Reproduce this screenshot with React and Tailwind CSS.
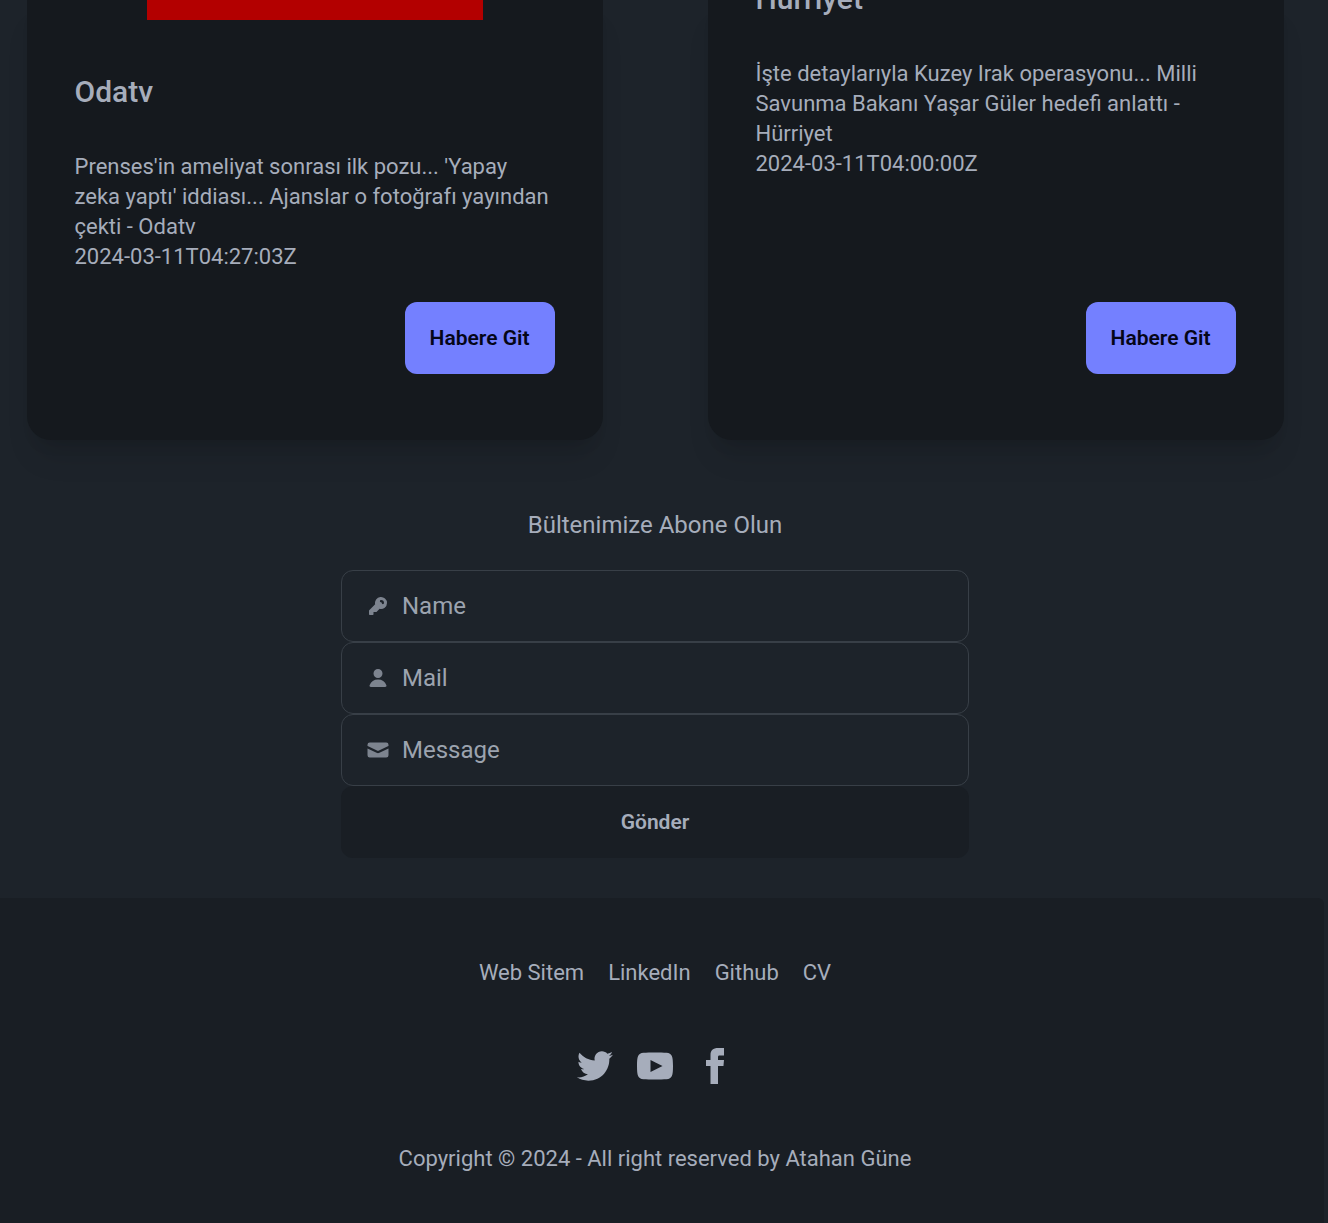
import React from "react";

const articles = [
  {
    source: "Odatv",
    text: "Prenses'in ameliyat sonrası ilk pozu... 'Yapay zeka yaptı' iddiası... Ajanslar o fotoğrafı yayından çekti - Odatv",
    date: "2024-03-11T04:27:03Z",
    banner: true,
  },
  {
    source: "Hürriyet",
    text: "İşte detaylarıyla Kuzey Irak operasyonu... Milli Savunma Bakanı Yaşar Güler hedefi anlattı - Hürriyet",
    date: "2024-03-11T04:00:00Z",
    banner: false,
  },
];

const fields = [
  {
    name: "name",
    label: "Name",
    paths: [
      "M14 6a4 4 0 0 1-4.899 3.899l-1.955 1.955a.5.5 0 0 1-.353.146H5v1.5a.5.5 0 0 1-.5.5h-2a.5.5 0 0 1-.5-.5v-2.293a.5.5 0 0 1 .146-.353l3.955-3.955A4 4 0 1 1 14 6Zm-4-2a.75.75 0 0 0 0 1.5.5.5 0 0 1 .5.5.75.75 0 0 0 1.5 0 2 2 0 0 0-2-2Z",
    ],
  },
  {
    name: "mail",
    label: "Mail",
    paths: [
      "M8 8a3 3 0 1 0 0-6 3 3 0 0 0 0 6ZM12.735 14c.618 0 1.093-.561.872-1.139a6.002 6.002 0 0 0-11.215 0c-.22.578.254 1.139.872 1.139h9.47Z",
    ],
  },
  {
    name: "message",
    label: "Message",
    paths: [
      "M2.5 3A1.5 1.5 0 0 0 1 4.5v.793c.026.009.051.02.076.032L7.674 8.51c.206.1.446.1.652 0l6.598-3.185A.755.755 0 0 1 15 5.293V4.5A1.5 1.5 0 0 0 13.5 3h-11Z",
      "M15 6.954 8.978 9.86a2.25 2.25 0 0 1-1.956 0L1 6.954V11.5A1.5 1.5 0 0 0 2.5 13h11a1.5 1.5 0 0 0 1.5-1.5V6.954Z",
    ],
  },
];

const links = ["Web Sitem", "LinkedIn", "Github", "CV"];

const socials = [
  {
    name: "Twitter",
    d: "M24 4.557c-.883.392-1.832.656-2.828.775 1.017-.609 1.798-1.574 2.165-2.724-.951.564-2.005.974-3.127 1.195-.897-.957-2.178-1.555-3.594-1.555-3.179 0-5.515 2.966-4.797 6.045-4.091-.205-7.719-2.165-10.148-5.144-1.29 2.213-.669 5.108 1.523 6.574-.806-.026-1.566-.247-2.229-.616-.054 2.281 1.581 4.415 3.949 4.89-.693.188-1.452.232-2.224.084.626 1.956 2.444 3.379 4.6 3.419-2.07 1.623-4.678 2.348-7.29 2.04 2.179 1.397 4.768 2.212 7.548 2.212 9.142 0 14.307-7.721 13.995-14.646.962-.695 1.797-1.562 2.457-2.549z",
  },
  {
    name: "YouTube",
    d: "M19.615 3.184c-3.604-.246-11.631-.245-15.23 0-3.897.266-4.356 2.62-4.385 8.816.029 6.185.484 8.549 4.385 8.816 3.6.245 11.626.246 15.23 0 3.897-.266 4.356-2.62 4.385-8.816-.029-6.185-.484-8.549-4.385-8.816zm-10.615 12.816v-8l8 3.993-8 4.007z",
  },
  {
    name: "Facebook",
    d: "M9 8h-3v4h3v12h5v-12h3.642l.358-4h-4v-1.667c0-.955.192-1.333 1.115-1.333h2.885v-5h-3.808c-3.596 0-5.192 1.583-5.192 4.615v3.385z",
  },
];

function ArticleCard({ article }) {
  return (
    <article className="flex max-w-[576px] flex-1 flex-col overflow-hidden rounded-b-3xl bg-[#15191e] px-12 pb-[66px] shadow-[0_24px_30px_-8px_rgba(0,0,0,0.1),0_12px_15px_-9px_rgba(0,0,0,0.1)]">
      {article.banner && <div className="mb-[51px] h-5 w-[70%] self-center bg-[#b30000]" />}
      <h2
        className={
          article.banner
            ? "text-[30px] leading-[42px] font-medium"
            : "-mt-[22px] text-[30px] leading-[42px] font-medium"
        }
      >
        {article.source}
      </h2>
      <p className="mt-[39px]">{article.text}</p>
      <p>{article.date}</p>
      <div className="mt-auto flex justify-end pt-[30px]">
        <button
          type="button"
          className="h-[72px] rounded-xl bg-[#7480ff] px-[25px] text-[21px] font-semibold text-[#050617]"
        >
          Habere Git
        </button>
      </div>
    </article>
  );
}

function Field({ field }) {
  return (
    <label className="flex h-[72px] items-center gap-3 rounded-xl border border-[#383f47] px-6">
      <svg viewBox="0 0 16 16" fill="currentColor" aria-hidden="true" className="size-6 opacity-70">
        {field.paths.map((d) => (
          <path key={d} d={d} fillRule="evenodd" clipRule="evenodd" />
        ))}
      </svg>
      <input
        type="text"
        name={field.name}
        aria-label={field.label}
        placeholder={field.label}
        className="min-w-0 flex-1 bg-transparent text-2xl leading-9 outline-none placeholder:text-[#9ca3af]"
      />
    </label>
  );
}

export default function App() {
  return (
    <div className="flex min-h-screen flex-col overflow-hidden bg-[#1d232a] font-[Roboto,sans-serif] text-[22px] leading-[30px] text-[#a6adbb]">
      <main className="pr-[18px] pb-10">
        <section className="flex justify-center gap-[105px]">
          {articles.map((article) => (
            <ArticleCard key={article.source} article={article} />
          ))}
        </section>
        <form className="mx-auto mt-[67px] flex w-full max-w-[628px] flex-col">
          <h3 className="mb-[27px] text-center text-2xl leading-9">Bültenimize Abone Olun</h3>
          {fields.map((field) => (
            <Field key={field.name} field={field} />
          ))}
          <button type="button" className="h-[72px] rounded-xl bg-[#191e24] text-[21px] font-semibold">
            Gönder
          </button>
        </form>
      </main>
      <footer className="mr-1 flex flex-1 flex-col items-center gap-[60px] rounded-tr-md bg-[#191e24] pt-[60px] pr-[14px] pb-[46px]">
        <nav className="flex gap-6">
          {links.map((link) => (
            <a key={link} href="#">
              {link}
            </a>
          ))}
        </nav>
        <nav className="flex gap-6">
          {socials.map((social) => (
            <a key={social.name} href="#" aria-label={social.name}>
              <svg viewBox="0 0 24 24" fill="currentColor" className="size-9">
                <path d={social.d} />
              </svg>
            </a>
          ))}
        </nav>
        <p>Copyright © 2024 - All right reserved by Atahan Güne</p>
      </footer>
    </div>
  );
}
